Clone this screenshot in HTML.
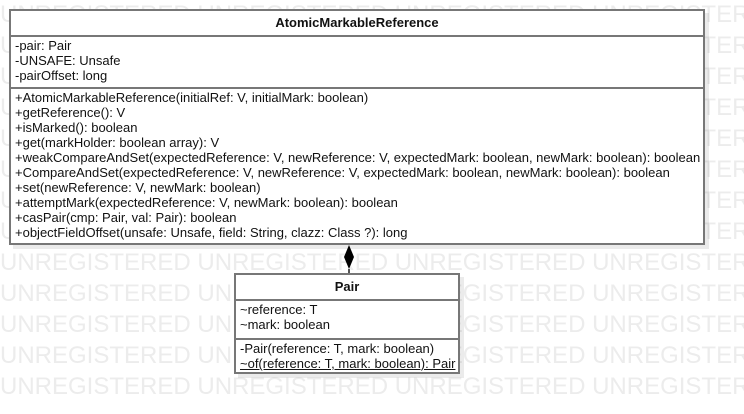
<!DOCTYPE html>
<html><head><style>
body{margin:0;width:744px;height:414px;background:#fff;position:relative;overflow:hidden;font-family:"Liberation Sans",Arial,sans-serif;}
.wm{position:absolute;left:0;font-size:24px;color:#ececec;white-space:nowrap;line-height:31px;}
.box{position:absolute;background:#fff;border:2px solid #777;box-shadow:4px 4px 0 rgba(0,0,0,0.08);font-size:13px;color:#111;}
.hd{font-weight:bold;text-align:center;border-bottom:2px solid #777;}
.sec{padding-left:4px;line-height:15px;white-space:nowrap;}
.sec+.sec{border-top:2px solid #777;}
</style></head><body>
<div class="wm" style="top:-1px">
UNREGISTERED UNREGISTERED UNREGISTERED UNREGISTERED<br>UNREGISTERED UNREGISTERED UNREGISTERED UNREGISTERED<br>UNREGISTERED UNREGISTERED UNREGISTERED UNREGISTERED<br>UNREGISTERED UNREGISTERED UNREGISTERED UNREGISTERED<br>UNREGISTERED UNREGISTERED UNREGISTERED UNREGISTERED<br>UNREGISTERED UNREGISTERED UNREGISTERED UNREGISTERED<br>UNREGISTERED UNREGISTERED UNREGISTERED UNREGISTERED<br>UNREGISTERED UNREGISTERED UNREGISTERED UNREGISTERED<br>UNREGISTERED UNREGISTERED UNREGISTERED UNREGISTERED<br>UNREGISTERED UNREGISTERED UNREGISTERED UNREGISTERED<br>UNREGISTERED UNREGISTERED UNREGISTERED UNREGISTERED<br>UNREGISTERED UNREGISTERED UNREGISTERED UNREGISTERED<br>UNREGISTERED UNREGISTERED UNREGISTERED UNREGISTERED
</div>
<div class="box" style="left:9px;top:9px;width:692px;height:232px;">
<div class="hd" style="height:24px;line-height:24px;">AtomicMarkableReference</div>
<div class="sec" style="height:49px;padding-top:1px;">-pair: Pair<br>-UNSAFE: Unsafe<br>-pairOffset: long</div>
<div class="sec" style="padding-top:1px;">+AtomicMarkableReference(initialRef: V, initialMark: boolean)<br>+getReference(): V<br>+isMarked(): boolean<br>+get(markHolder: boolean array): V<br>+weakCompareAndSet(expectedReference: V, newReference: V, expectedMark: boolean, newMark: boolean): boolean<br>+CompareAndSet(expectedReference: V, newReference: V, expectedMark: boolean, newMark: boolean): boolean<br>+set(newReference: V, newMark: boolean)<br>+attemptMark(expectedReference: V, newMark: boolean): boolean<br>+casPair(cmp: Pair, val: Pair): boolean<br>+objectFieldOffset(unsafe: Unsafe, field: String, clazz: Class ?): long</div>
</div>
<svg style="position:absolute;left:340px;top:243px" width="20" height="32"><polygon points="9,2 14,14 9,26 4,14" fill="#000"/><line x1="9" y1="26" x2="9" y2="31" stroke="#555" stroke-width="2"/></svg>
<div class="box" style="left:234px;top:273px;width:222px;height:97px;">
<div class="hd" style="height:24px;line-height:24px;">Pair</div>
<div class="sec" style="height:36px;padding-top:1px;">~reference: T<br>~mark: boolean</div>
<div class="sec" style="padding-top:1px;">-Pair(reference: T, mark: boolean)<br><u>~of(reference: T, mark: boolean): Pair</u></div>
</div>
</body></html>
